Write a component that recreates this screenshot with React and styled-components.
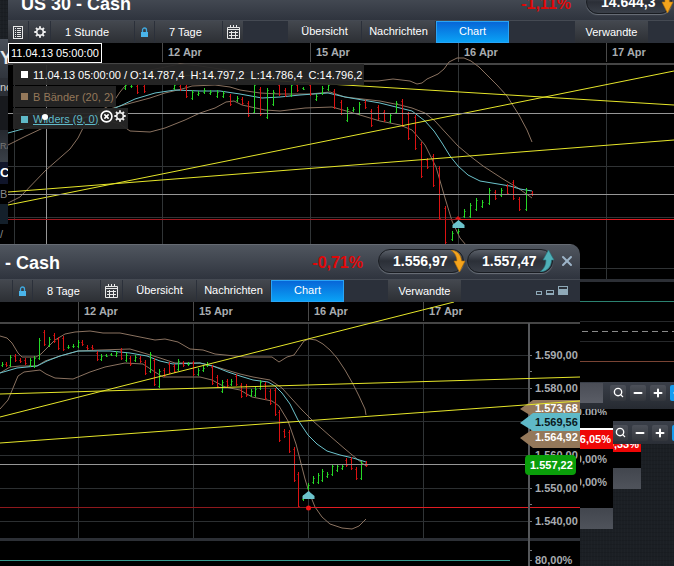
import React from 'react'
import styled, { createGlobalStyle, css } from 'styled-components'
import { Search, Minus, Plus, X, CircleX } from 'lucide-react'

const GREEN = '#26d826'
const RED = '#dc1212'
const TAN = '#8a7260'
const CYAN = '#6cc3cc'
const YELLOW = '#e6e62a'

// [x, high, low, up?]
const dowBars = [
  [125, 83, 90, 1], [131, 84, 88, 1], [137, 84, 94, 0], [144, 84, 93, 0],
  [174, 83, 90, 1], [180, 84, 91, 0], [186, 84, 98, 0], [192, 90, 100, 1],
  [198, 91, 96, 1], [204, 88, 94, 1], [210, 90, 95, 1], [217, 90, 98, 1],
  [223, 91, 98, 1], [230, 94, 106, 0], [237, 96, 102, 1], [242, 97, 105, 0],
  [248, 101, 117, 0], [254, 83, 114, 1], [260, 87, 116, 0], [267, 88, 119, 1],
  [273, 90, 106, 1], [279, 83, 96, 0], [285, 88, 97, 0], [291, 83, 97, 1],
  [297, 83, 92, 0], [303, 87, 90, 1], [310, 83, 96, 0], [316, 94, 101, 1],
  [322, 86, 95, 1], [328, 83, 91, 1], [334, 89, 109, 0], [341, 100, 115, 0],
  [347, 107, 122, 1], [353, 107, 112, 1], [359, 102, 115, 1], [365, 100, 109, 0],
  [371, 109, 127, 0], [378, 105, 120, 0], [384, 110, 122, 0], [390, 113, 123, 1],
  [396, 101, 114, 1], [402, 99, 127, 0], [408, 112, 140, 0], [415, 115, 150, 0],
  [421, 142, 178, 0], [427, 158, 169, 0], [433, 154, 187, 0], [439, 166, 220, 0],
  [445, 206, 244, 0], [452, 231, 241, 1], [458, 229, 234, 1], [464, 209, 218, 1],
  [470, 203, 218, 1], [476, 198, 211, 1], [482, 200, 208, 1], [489, 188, 205, 1],
  [495, 190, 200, 0], [501, 188, 197, 1], [507, 184, 195, 0], [513, 180, 200, 0],
  [519, 197, 211, 0], [526, 188, 211, 1], [532, 191, 196, 0],
]

const spxBars = [
  [2, 362, 367, 1], [6, 362, 367, 0], [10, 355, 367, 1], [15, 354, 362, 0],
  [20, 358, 363, 0], [25, 358, 365, 0], [30, 358, 367, 1], [34, 356, 368, 1],
  [39, 338, 360, 1], [44, 330, 346, 0], [49, 337, 347, 1], [54, 333, 343, 0],
  [58, 337, 350, 0], [63, 336, 351, 0], [68, 345, 349, 1], [73, 344, 348, 1],
  [78, 340, 348, 1], [82, 340, 346, 0], [87, 345, 350, 0], [92, 345, 350, 0],
  [97, 351, 361, 0], [101, 354, 361, 1], [106, 354, 357, 1], [111, 353, 356, 1],
  [116, 351, 357, 1], [121, 348, 360, 0], [126, 353, 362, 1], [130, 356, 366, 0],
  [135, 355, 362, 1], [140, 356, 363, 0], [145, 360, 375, 0], [150, 352, 373, 1],
  [154, 358, 386, 0], [159, 369, 388, 1], [164, 368, 377, 0], [169, 362, 374, 0],
  [174, 364, 373, 0], [178, 359, 371, 1], [183, 361, 367, 0], [188, 362, 366, 1],
  [193, 361, 376, 0], [198, 368, 376, 1], [203, 366, 372, 1], [207, 362, 367, 1],
  [212, 365, 385, 0], [217, 375, 388, 0], [222, 380, 393, 1], [227, 379, 387, 0],
  [231, 379, 386, 1], [236, 374, 386, 0], [241, 383, 398, 0], [246, 384, 397, 0],
  [251, 389, 397, 1], [255, 387, 397, 1], [260, 380, 390, 1], [265, 382, 400, 0],
  [270, 389, 405, 0], [275, 388, 416, 0], [279, 410, 442, 0], [284, 429, 438, 0],
  [289, 430, 453, 0], [294, 447, 482, 0], [298, 472, 508, 0], [303, 495, 501, 1],
  [308, 483, 490, 1], [313, 476, 484, 1], [318, 473, 484, 1], [322, 469, 482, 1],
  [327, 472, 478, 1], [332, 464, 476, 1], [337, 464, 472, 1], [342, 464, 470, 1],
  [346, 458, 467, 0], [351, 457, 470, 0], [356, 467, 480, 0], [361, 461, 480, 1],
  [366, 461, 467, 0],
]

const dowLines = [
  { color: TAN, points: '8,203 20,197 46,170 70,149 78,138 83,128 98,112 112,104 120,92 130,80 150,70 180,64 200,66 240,72 300,78 360,81 378,81 393,79 410,81 417,84 422,83 427,79 438,74 444,69 449,62 457,58 464,58 471,61 479,67 487,75 497,85 507,96 519,115 527,130 532,142' },
  { color: TAN, points: '8,145 26,136 43,128 70,122 100,112 120,106 150,98 165,93 182,89 192,86 215,85 230,87 240,90 260,93 280,94 310,94 330,92 345,97 380,101 400,105 412,108 425,113 435,121 446,133 458,146 470,156 483,166 503,179 518,188 532,198' },
  { color: TAN, points: '105,120 120,124 130,131 150,132 165,128 185,120 200,113 215,108 226,102 234,101 242,105 265,110 280,111 305,108 332,107 350,112 380,121 400,125 412,130 425,145 436,167 445,198 452,221 460,238 466,245' },
  { color: CYAN, points: '8,133 30,127 60,124 100,114 120,106 135,99 155,93 175,90 200,91 220,91 240,94 262,98 280,97 300,95 328,93 345,97 380,103 400,108 412,111 425,121 434,131 442,143 450,156 458,166 468,175 480,181 492,183 510,186 520,189 532,191' },
]

const spxLines = [
  { color: TAN, points: '0,336 7,338 12,343 18,353 22,357 36,357 41,354 47,348 55,340 65,334 75,332 90,331 103,333 120,333 135,336 155,340 165,339 178,342 190,349 203,350 215,354 225,355 245,357 272,357 279,362 287,357 294,355 299,348 304,341 309,339 316,340 323,344 330,350 337,358 345,370 353,384 359,396 365,409 366,415' },
  { color: TAN, points: '0,373 10,367 20,366 37,366 45,361 60,356 78,351 100,350 130,349 147,354 160,358 175,363 200,363 220,368 240,374 253,377 270,380 282,388 292,399 302,410 313,421 330,436 345,449 357,459 366,466' },
  { color: TAN, points: '0,409 8,400 13,388 18,376 24,372 40,370 46,374 55,378 73,379 90,372 105,367 125,363 143,364 155,372 163,377 180,377 200,377 212,380 225,387 240,390 252,397 272,401 279,406 288,421 296,444 305,479 309,492 315,507 322,517 330,524 342,528 352,529 359,526 366,519' },
  { color: CYAN, points: '0,373 17,368 37,366 47,361 60,356 78,351 110,351 130,353 147,356 160,361 173,364 200,363 213,366 228,372 240,376 253,380 268,382 275,386 282,393 290,404 298,420 308,435 317,444 327,451 340,455 353,458 366,462' },
]

const Bars = ({ data }) =>
  data.map(([x, hi, lo, up]) => (
    <g key={x} fill={up ? GREEN : RED}>
      <rect x={x} y={hi} width='1' height={lo - hi} />
      <rect x={x - 1} y={up ? lo - 2 : hi + 2} width='1' height='1' opacity='0.6' />
      <rect x={x + 1} y={up ? hi + 2 : lo - 2} width='1' height='1' opacity='0.6' />
    </g>
  ))

const Lines = ({ data }) =>
  data.map((line, i) => (
    <polyline key={i} points={line.points} fill='none' stroke={line.color} strokeLinejoin='round' />
  ))

const DateAxis = ({ dates, top, bottom }) =>
  dates.map(([x, label]) => (
    <g key={x}>
      <rect x={x} y={top} width='1' height='19' fill='#4a4a4a' />
      <rect x={x} y={top + 22} width='1' height={bottom - top - 22} fill='#303436' />
      <AxisText x={x + 6} y={top + 13}>{label}</AxisText>
    </g>
  ))

const DowChart = () => (
  <Chart $height={339} role='img' aria-label='US 30 Chart'>
    <g transform='translate(-8 -43)'>
      <DateAxis top={43} bottom={279} dates={[[14, ''], [162, '12 Apr'], [310, '15 Apr'], [458, '16 Apr'], [606, '17 Apr']]} />
      <rect x='8' y='63' width='100%' height='2' fill='#454545' />
      {[166, 217, 268].map((y) => (
        <rect key={y} x='8' y={y} width='100%' height='1' fill='#303335' />
      ))}
      <Lines data={dowLines} />
      <Bars data={dowBars} />
      <g stroke={YELLOW}>
        <line x1='8' y1='192' x2='674' y2='140' />
        <line x1='8' y1='205' x2='674' y2='71' />
        <line x1='180' y1='75' x2='674' y2='105' />
      </g>
      <rect x='8' y='113' width='100%' height='1' fill='#969696' />
      <rect x='8' y='194' width='100%' height='1' fill='#969696' />
      <rect x='46' y='65' width='1' height='179' fill='#969696' />
      <rect x='8' y='219' width='100%' height='1' fill='#a01a20' />
      <rect x='458' y='219' width='100%' height='1' fill='#e01c22' />
      <path d='M455 219l3-3 3 3z' fill='#e01414' />
      <path d='M458.500 220l6 5v3h-12v-3z' fill={CYAN} />
      <rect x='8' y='279' width='100%' height='3' fill='#2c2f35' />
      <rect x='8' y='301' width='100%' height='1' fill='#2b8270' />
      <rect x='8' y='321' width='100%' height='1' fill='#26282a' />
      <line x1='582' x2='800' y1='331.500' y2='331.500' stroke='#8a8a8a' strokeDasharray='6 4' />
      <rect x='8' y='341' width='100%' height='1' fill='#26282a' />
      <rect x='8' y='361' width='100%' height='1' fill='#7a4434' />
    </g>
  </Chart>
)

const prices = [[355, '1.590,00'], [388, '1.580,00'], [455, '1.560,00'], [488, '1.550,00'], [521, '1.540,00']]

const SpxChart = () => (
  <Chart $height={270} role='img' aria-label='SPX Chart'>
    <g transform='translate(0 -302)'>
      <DateAxis top={302} bottom={539} dates={[[78, '12 Apr'], [193, '15 Apr'], [308, '16 Apr'], [423, '17 Apr']]} />
      <rect y='322' width='100%' height='2' fill='#454545' />
      {[355, 388, 421, 455, 488, 521].map((y) => (
        <rect key={y} y={y} width='528' height='1' fill='#2c2f31' />
      ))}
      <Lines data={spxLines} />
      <Bars data={spxBars} />
      <rect y='464' width='528' height='1' fill='#969696' />
      <rect y='507' width='100%' height='1' fill='#8e181c' />
      <rect x='308' y='507' width='100%' height='1' fill='#e01c22' />
      <circle cx='308.500' cy='508' r='2.500' fill='#f01414' />
      <path d='M308.500 491l6 5v3h-12v-3z' fill={CYAN} />
      <rect y='538' width='100%' height='3' fill='#2c2f35' />
      <rect y='560' width='510' height='1' fill='#369a8e' />

      <rect x='528' y='323' width='2' height='243' fill='#55575a' />
      {[355, 371, 388, 455, 488, 504, 521, 550, 560].map((y) => (
        <rect key={y} x='530' y={y} width='2' height='1' fill='#77797c' />
      ))}
      {prices.map(([y, label]) => (
        <AxisText key={y} x='535' y={y + 4}>{label}</AxisText>
      ))}
      <AxisText x='535' y='564'>80,00%</AxisText>

      <path d='M520 409l13-9h47v17h-47z' fill='#94785a' />
      <TagText x='535' y='412'>1.573,68</TagText>
      <path d='M520 438l13-9h47v19h-47z' fill='#94785a' />
      <TagText x='535' y='441'>1.564,92</TagText>
      <path d='M520 423l13-10h47v18h-47z' fill='#5fb9c8' />
      <TagText x='535' y='426' $dark>1.569,56</TagText>
      <rect x='525' y='455' width='51' height='20' rx='4' fill='#0a9e0a' />
      <TagText x='530' y='469'>1.557,22</TagText>

      <g stroke={YELLOW}>
        <line x1='0' y1='417' x2='454' y2='302' />
        <line x1='0' y1='394' x2='580' y2='377' />
        <line x1='0' y1='443' x2='580' y2='401' />
      </g>
    </g>
  </Chart>
)

const LockIcon = () => (
  <svg width='9' height='11' viewBox='0 0 9 11' aria-hidden='true'>
    <path d='M2.500 5V3a2 2 0 0 1 4 0v2' fill='none' stroke='#3fa9e0' strokeWidth='1.300' />
    <rect x='1' y='5' width='7' height='5' fill='#4ab4ea' />
  </svg>
)

const CalendarIcon = () => (
  <svg width='13' height='14' viewBox='0 0 13 14' aria-hidden='true'>
    <path d='M3.500 0v3M6.500 0v3M9.500 0v3' stroke='#e8e8e8' />
    <path d='M.5 2.500h12v11H.5zM1 4.500h11' fill='none' stroke='#e8e8e8' />
    <path d='M2 7.500h9M2 10.500h9M4.500 6v7M8.500 6v7' stroke='#e8e8e8' />
  </svg>
)

const ListIcon = () => (
  <svg width='10' height='13' viewBox='0 0 10 13' aria-hidden='true'>
    <rect x='.5' y='.5' width='9' height='12' fill='none' stroke='#e8e8e8' />
    <path d='M2 2.500h1M4 2.500h4M2 4.500h1M4 4.500h4M2 6.500h1M4 6.500h4M2 8.500h1M4 8.500h4M2 10.500h1M4 10.500h4' stroke='#e8e8e8' />
  </svg>
)

const GearIcon = () => (
  <svg width='12' height='12' viewBox='0 0 12 12' fill='none' stroke='#f0f0f0' aria-hidden='true'>
    <circle cx='6' cy='6' r='3.300' strokeWidth='1.600' />
    <path
      d='M6 .3v2M6 9.700v2M.3 6h2M9.700 6h2M2 2l1.400 1.400M8.600 8.600L10 10M10 2L8.600 3.400M3.400 8.600L2 10'
      strokeWidth='1.900'
    />
  </svg>
)

const DownArrow = () => (
  <svg width='16' height='22' viewBox='0 0 16 22' aria-hidden='true'>
    <path d='M1 0c7 1 10 5 10.500 11H15L9.500 22 4 11h3C7 7 5 3 1 0z' fill='#f5a41c' stroke='#b97408' strokeWidth='.6' />
  </svg>
)

const UpArrow = () => (
  <svg width='16' height='22' viewBox='0 0 16 22' aria-hidden='true'>
    <path d='M1 22c8-1 11-5 11.500-12H15L9.500 0 4 10h3c0 5-2 9-6 12z' fill='#4fb0b8' stroke='#27767e' strokeWidth='.6' />
  </svg>
)

const SizeIcon = ({ w, h }) => (
  <svg width={w} height={h} aria-hidden='true'>
    <rect width={w} height={h} fill='#8fa9b8' />
    <rect x='1' y='1' width={w - 2} height='2' fill='#2b3038' />
  </svg>
)

const ZoomTools = () => (
  <>
    <ZoomButton type='button' aria-label='Zoom'><Search size={11} strokeWidth={3} /></ZoomButton>
    <ZoomButton type='button' aria-label='Verkleinern'><Minus size={12} strokeWidth={4} /></ZoomButton>
    <ZoomButton type='button' aria-label='Vergrößern'><Plus size={12} strokeWidth={4} /></ZoomButton>
    <ZoomButton type='button' aria-label='Verschieben' $active><Minus size={12} strokeWidth={4} /></ZoomButton>
  </>
)

const Header = ({ title, change, sell, buy, indent }) => (
  <TitleBar $indent={indent}>
    <Title>{title}</Title>
    <Change>{change}</Change>
    <PriceButton type='button'>{sell}<DownArrow /></PriceButton>
    <PriceButton type='button'>{buy}<UpArrow /></PriceButton>
    <CloseButton type='button' aria-label='Schließen'><X size={16} strokeWidth={3} /></CloseButton>
  </TitleBar>
)

const Tabs = () => (
  <>
    <Tool type='button' $width={73} $tab>Übersicht</Tool>
    <Tool type='button' $width={73} $tab>Nachrichten</Tool>
    <Tool type='button' $width={73} $tab $active>Chart</Tool>
  </>
)

const App = () => {
  return (
    <>
      <GlobalStyle />
      <Desktop>
        <EdgeWindow>
          <EdgeRow $height={39} $bg='linear-gradient(#4a505a, #30353d)' $size={18} $color='#e8e8e8'>Y</EdgeRow>
          <EdgeRow $height={18} $bg='#2b2f36' $size={11} $color='#d0d0d0'>nc</EdgeRow>
          <EdgeRow $height={34} $bg='#17191d' />
          <EdgeRow $height={32} $bg='linear-gradient(#24282e, #3a4048)' $size={9} $color='#777'>RA</EdgeRow>
          <EdgeRow $height={22} $bg='#10152a' $size={13} $color='#fff'>C</EdgeRow>
          <EdgeRow $height={20} $bg='#000' $size={11} $color='#888'>B</EdgeRow>
          <EdgeRow $height={20} $bg='#14202b' />
          <EdgeRow $height={20} $bg='#000' $size={11} $color='#888'>/</EdgeRow>
        </EdgeWindow>

        <PortfolioWindow>
          <Filler $height={12} />
          <ToolRow><ZoomTools /></ToolRow>
          <Narrow>
            <LossRow $height={8}>-0,33%</LossRow>
            <Filler $height={16} />
            <Thumb />
          </Narrow>
        </PortfolioWindow>

        <PercentWindow>
          <PercentRow $height={6}>0,00%</PercentRow>
          <Filler $height={13} />
          <LossRow $height={21} $line>-6,05%</LossRow>
          <PercentRow $height={20}>0,00%</PercentRow>
          <PercentRow $height={26}>0,00%</PercentRow>
          <Filler $height={13} />
          <Thumb />
        </PercentWindow>

        <DowWindow>
          <Header title='US 30 - Cash' change='-1,11%' sell='14.644,3' buy='14.646,3' indent={13} />
          <Toolbar>
            <Tool type='button' $width={20} aria-label='Liste'><ListIcon /></Tool>
            <Tool type='button' $width={21} aria-label='Einstellungen'><GearIcon /></Tool>
            <Tool type='button' $width={83} $pad={14}>1 Stunde</Tool>
            <Tool type='button' $width={19} aria-label='Sperren'><LockIcon /></Tool>
            <Tool type='button' $width={67} $pad={14}>7 Tage</Tool>
            <Tool type='button' $width={20} aria-label='Kalender'><CalendarIcon /></Tool>
            <Gap $width={43} />
            <Tabs />
            <Gap $width={64} />
            <Tool type='button' $width={73}>Verwandte</Tool>
          </Toolbar>
          <ChartArea>
            <DowChart />
            <Legend>
              <Tooltip>11.04.13 05:00:00</Tooltip>
              <LegendRow $color='#fff'>
                <Swatch />11.04.13 05:00:00 / O:14.787,4&nbsp; H:14.797,2&nbsp; L:14.786,4&nbsp; C:14.796,2
              </LegendRow>
              <LegendRow $color='#94785a'><Swatch />B Bänder (20, 2)</LegendRow>
              <LegendRow $color='#5fb9c8'>
                <LegendLink href='#wilders'><Swatch />Wilders (9, 0)</LegendLink>
                <LegendTools>
                  <IconButton type='button' aria-label='Entfernen'><CircleX size={13} strokeWidth={3} /></IconButton>
                  <IconButton type='button' aria-label='Bearbeiten'><GearIcon /></IconButton>
                </LegendTools>
              </LegendRow>
              <CrossDot />
            </Legend>
          </ChartArea>
          <ScrollRow><Track /><ZoomTools /></ScrollRow>
        </DowWindow>

        <SpxWindow>
          <Header title='- Cash' change='-0,71%' sell='1.556,97' buy='1.557,47' indent={5} />
          <Toolbar>
            <Gap $width={12} $filled />
            <Tool type='button' $width={19} aria-label='Sperren'><LockIcon /></Tool>
            <Tool type='button' $width={67} $pad={14}>8 Tage</Tool>
            <Tool type='button' $width={21} aria-label='Kalender'><CalendarIcon /></Tool>
            <Tabs />
            <Gap $width={42} />
            <Tool type='button' $width={73}>Verwandte</Tool>
            <SizeTools>
              <IconButton type='button' aria-label='Klein'><SizeIcon w={6} h={4} /></IconButton>
              <IconButton type='button' aria-label='Mittel'><SizeIcon w={8} h={5} /></IconButton>
              <IconButton type='button' aria-label='Groß'><SizeIcon w={10} h={9} /></IconButton>
            </SizeTools>
          </Toolbar>
          <SpxChart />
        </SpxWindow>
      </Desktop>
    </>
  )
}

const GlobalStyle = createGlobalStyle`
  * {
    box-sizing: border-box;
  }
  body {
    margin: 0;
    font-family: 'Liberation Sans', Arial, sans-serif;
    font-size: 11px;
    color: #fff;
  }
  button {
    font: inherit;
    color: inherit;
    padding: 0;
    border: 0;
    background: none;
    cursor: pointer;
  }
`

const Desktop = styled.main`
  position: relative;
  height: 100vh;
  overflow: hidden;
  background:
    repeating-linear-gradient(90deg, rgba(255, 255, 255, 0.01) 0 1px, transparent 1px 3px),
    repeating-linear-gradient(rgba(0, 0, 0, 0.1) 0 1px, transparent 1px 4px),
    #1b1f24;
`

const windowBase = css`
  position: absolute;
  display: flex;
  flex-direction: column;
  overflow: hidden;
`

const DowWindow = styled.section`
  ${windowBase}
  top: -15px;
  left: 8px;
  right: -114px;
`

const SpxWindow = styled.section`
  ${windowBase}
  top: 244px;
  left: 0;
  right: 94px;
  background: #000;
  border-top-right-radius: 10px;
`

const EdgeWindow = styled.section`
  ${windowBase}
  top: 39px;
  left: 0;
  width: 100px;
`

const PortfolioWindow = styled.section`
  ${windowBase}
  top: 409px;
  left: 500px;
  right: 0;
`

const PercentWindow = styled.section`
  ${windowBase}
  top: 409px;
  left: 500px;
  right: 61px;
`

const EdgeRow = styled.div`
  height: ${(p) => p.$height}px;
  line-height: ${(p) => p.$height}px;
  background: ${(p) => p.$bg};
  color: ${(p) => p.$color};
  font-size: ${(p) => p.$size}px;
  font-weight: ${(p) => (p.$size > 12 ? 'bold' : 'normal')};
`

const TitleBar = styled.header`
  display: flex;
  align-items: center;
  gap: 3px;
  height: 36px;
  padding: 0 5px 2px ${(p) => p.$indent}px;
  background: linear-gradient(#50565f, #2f343e);
  border-top: 1px solid #666b73;
  border-bottom: 1px solid #454a53;
`

const Title = styled.h1`
  flex: 1;
  margin: 0;
  padding-top: 4px;
  font-size: 18px;
  line-height: 20px;
`

const Change = styled.strong`
  margin-right: 12px;
  padding-top: 3px;
  color: #e00808;
  font-size: 16px;
`

const PriceButton = styled.button`
  display: flex;
  align-items: center;
  justify-content: space-between;
  width: 86px;
  height: 24px;
  padding-left: 14px;
  border: 1px solid #191c21;
  border-radius: 12px;
  background: linear-gradient(#5a6069, #2b2f37 50%, #3a3f48);
  box-shadow: 0 1px 1px #6d737c;
  font-size: 14px;
  font-weight: bold;

  svg {
    flex: none;
    margin-right: -3px;
  }
`

const CloseButton = styled.button`
  display: flex;
  width: 16px;
  margin-left: 3px;
  color: #9db4c8;
`

const Toolbar = styled.nav`
  display: flex;
  gap: 1px;
  height: 22px;
  background: #2b303a;
`

const Tool = styled.button`
  display: flex;
  flex: none;
  align-items: center;
  justify-content: ${(p) => (p.$pad ? 'flex-start' : 'center')};
  width: ${(p) => p.$width}px;
  padding-left: ${(p) => (p.$pad ? p.$pad : 0)}px;
  background: linear-gradient(#44484f, #2c2f34);
  ${(p) => p.$tab && css`
    padding-bottom: 2px;
  `}
  ${(p) => p.$active && css`
    border: 1px solid #2aa4f5;
    background: linear-gradient(#0766d8, #0aa2f5);
  `}
`

const Gap = styled.span`
  flex: none;
  width: ${(p) => p.$width}px;
  background: ${(p) => (p.$filled ? 'linear-gradient(#44484f, #2c2f34)' : 'none')};
`

const SizeTools = styled.div`
  display: flex;
  align-items: flex-end;
  gap: 4px;
  margin-left: auto;
  padding: 0 12px 7px 0;
`

const IconButton = styled.button`
  display: flex;
`

const ChartArea = styled.div`
  position: relative;
`

const Chart = styled.svg`
  display: block;
  width: 100%;
  height: ${(p) => p.$height}px;
  background: #000;
`

const AxisText = styled.text`
  fill: #a8acb0;
  font-size: 11px;
  font-weight: bold;
`

const TagText = styled.text`
  fill: ${(p) => (p.$dark ? '#0b1a1e' : '#fff')};
  font-size: 11px;
  font-weight: bold;
`

const Legend = styled.div`
  position: absolute;
  top: 0;
  left: 0;
  display: flex;
  flex-direction: column;
  align-items: flex-start;
  gap: 1px;
`

const Tooltip = styled.div`
  height: 20px;
  padding: 0 2px;
  border: 1px solid #fff;
  background: #000;
  line-height: 18px;
`

const LegendRow = styled.div`
  display: flex;
  align-items: center;
  height: 21px;
  margin-left: 5px;
  padding: 0 2px 0 8px;
  background: rgba(38, 38, 38, 0.95);
  color: ${(p) => p.$color};
  white-space: nowrap;
`

const Swatch = styled.i`
  display: inline-block;
  width: 7px;
  height: 7px;
  margin-right: 5px;
  background: currentColor;
`

const LegendLink = styled.a`
  color: inherit;
  text-decoration: underline;
`

const LegendTools = styled.span`
  display: flex;
  gap: 1px;
  padding: 0 0 5px 2px;
  color: #fff;
`

// crosshair marker, sits on top of the last legend row
const CrossDot = styled.i`
  position: absolute;
  left: 34px;
  bottom: 9px;
  width: 6px;
  height: 6px;
  border-radius: 50%;
  background: #fff;
`

const ScrollRow = styled.div`
  display: flex;
  align-items: center;
  gap: 4px;
  height: 27px;
  padding: 0 102px 6px 0;
  background: linear-gradient(#3a3f49, #262a31);
`

const ToolRow = styled.div`
  display: flex;
  align-items: center;
  justify-content: flex-end;
  gap: 4px;
  height: 23px;
  margin-right: -14px;
  background: linear-gradient(#3a3f49, #2a2e36);
`

const Track = styled.div`
  flex: 1;
  height: 20px;
  margin-right: 3px;
  background: linear-gradient(#4a4d56, #5a5d66);
`

const ZoomButton = styled.button`
  display: flex;
  flex: none;
  align-items: center;
  justify-content: center;
  width: 16px;
  height: 16px;
  border-radius: 2px;
  background: ${(p) => (p.$active ? '#149cf0' : 'linear-gradient(#4c5059, #33363c)')};
`

const Narrow = styled.div`
  margin-right: 33px;
`

const Filler = styled.div`
  height: ${(p) => p.$height}px;
  background: #000;
`

const PercentRow = styled.div`
  height: ${(p) => p.$height}px;
  padding-right: 6px;
  overflow: hidden;
  background: #000;
  color: #a8acb0;
  font-weight: bold;
  line-height: ${(p) => p.$height}px;
  text-align: right;
`

const LossRow = styled.div`
  height: ${(p) => p.$height}px;
  padding-right: 2px;
  overflow: hidden;
  border-top: ${(p) => (p.$line ? '2px solid #fff' : '0')};
  background: #ee0606;
  font-weight: bold;
  line-height: ${(p) => (p.$line ? 19 : 0)}px;
  text-align: right;
`

const Thumb = styled.div`
  height: 21px;
  background: linear-gradient(#42464e, #4f535b);
`

export default App
